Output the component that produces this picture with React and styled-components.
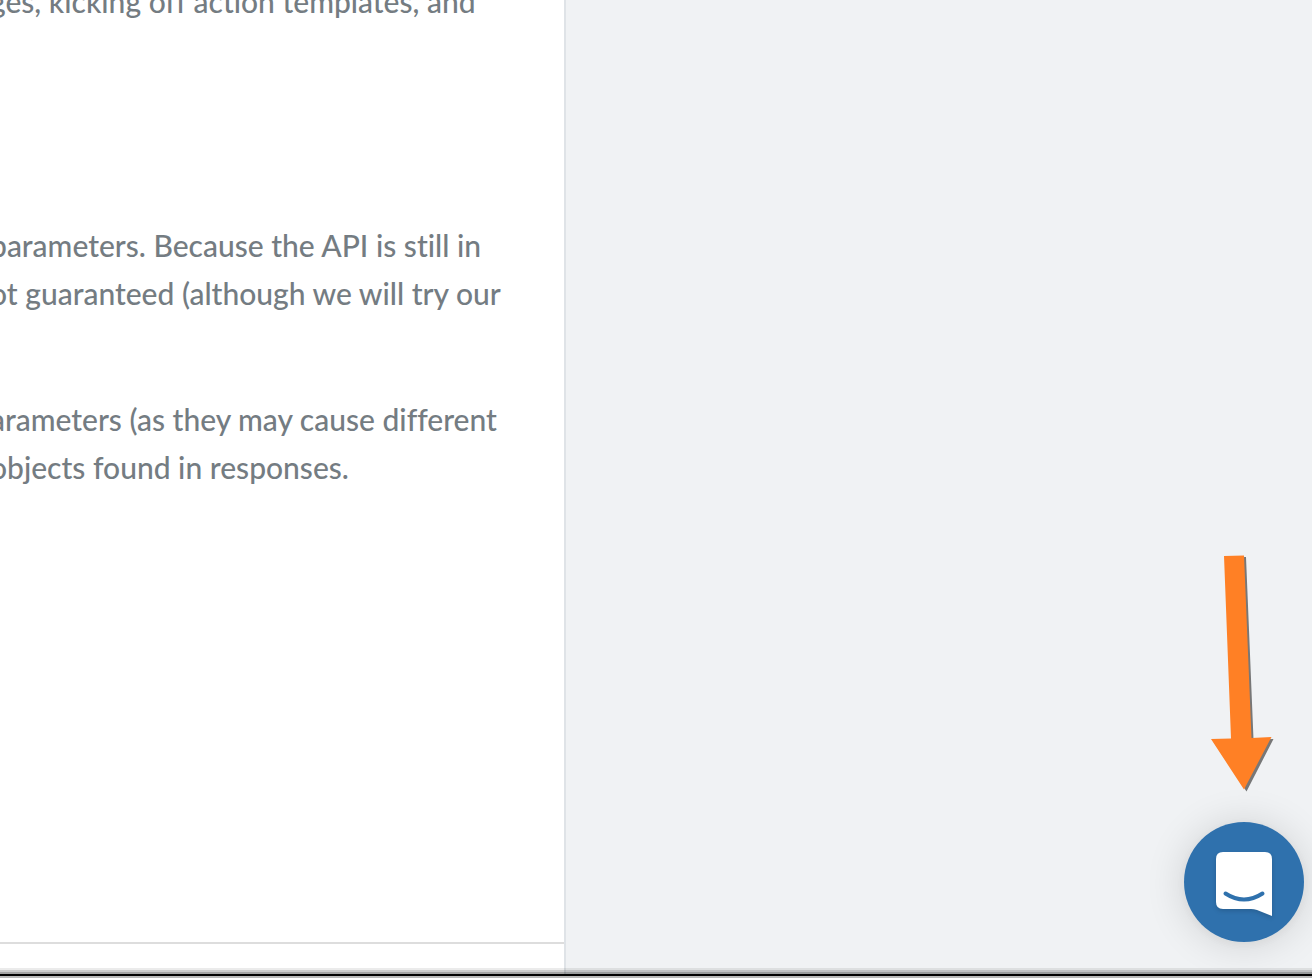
import React from 'react'
import styled, { createGlobalStyle } from 'styled-components'

const GlobalStyle = createGlobalStyle`
 * {
  box-sizing: border-box;
 }
 body {
  margin: 0;
  overflow: hidden;
  background-color: #f0f2f4;
  font-family: Lato, 'Open Sans', sans-serif;
 }
`

const Page = styled.div`
 display: flex;
 height: 100vh;
 overflow: hidden;
`

const DocsColumn = styled.main`
 display: flex;
 flex-direction: column;
 width: calc(43% + 2px);
 background-color: #ffffff;
 border-right: 2px solid #dfe3e7;
 overflow: hidden;
`

const Article = styled.article`
 flex: 1;
 margin-top: -23px;
 margin-left: -10px;
 border-bottom: 2px solid #dddddd;
`

const Paragraph = styled.p`
 margin: 0 0 ${(props) => (props.$last ? '196px' : '78px')};
 color: #747c82;
 font-size: 30px;
 font-weight: 500;
 font-variant-ligatures: none;
 line-height: 48px;
 white-space: nowrap;
`

const ColumnFooter = styled.footer`
 height: 34px;
`

const Examples = styled.aside`
 flex: 1;
 background-color: #f0f2f4;
`

const Messenger = styled.div`
 position: fixed;
 right: 8px;
 bottom: 36px;
 display: flex;
 flex-direction: column;
 align-items: center;
 gap: 30px;
`

const Launcher = styled.button`
 display: flex;
 align-items: center;
 justify-content: center;
 width: 120px;
 height: 120px;
 padding: 4px 0 0;
 border: none;
 border-radius: 50%;
 background-color: #2f71ad;
 box-shadow: 0 2px 40px rgba(0, 0, 0, 0.14), 0 2px 12px rgba(0, 0, 0, 0.05);
 cursor: pointer;

 svg {
  filter: drop-shadow(0 2px 2px rgba(0, 0, 0, 0.15));
 }
`

const WindowEdge = styled.div`
 position: fixed;
 left: 0;
 right: 0;
 bottom: 0;
 height: 10px;
 background: linear-gradient(
  rgba(0, 0, 0, 0.08) 2px,
  rgba(0, 0, 0, 0.2) 2px 4px,
  rgba(0, 0, 0, 0.36) 4px 6px,
  #000000 6px 8px,
  #b8b8b8 8px
 );
`

function Arrow() {
 return (
  <svg width="68" height="238" viewBox="0 0 68 238" aria-hidden="true">
   <path d="M16 3.5 L36 3 L43.5 185.5 L63.5 185 L36.5 237.5 L3 187 L23 186 Z" fill="#777777" />
   <path d="M14 2 L34 1.5 L41.5 184 L61.5 183 L34 235.5 L1 185 L21 184.5 Z" fill="#ff8025" />
  </svg>
 )
}

function ChatIcon() {
 return (
  <svg width="56" height="64" viewBox="0 0 56 64" aria-hidden="true">
   <path
    d="M7 0 H49 Q56 0 56 7 V64 L41 58 Q38 57 35 57 H7 Q0 57 0 50 V7 Q0 0 7 0 Z"
    fill="#ffffff"
   />
   <path
    d="M9.5 41.5 Q28 53.5 46.5 41.5"
    fill="none"
    stroke="#2f71ad"
    strokeWidth="4"
    strokeLinecap="round"
   />
  </svg>
 )
}

function App() {
 return (
  <>
   <GlobalStyle />
   <Page>
    <DocsColumn>
     <Article>
      <Paragraph $last>ges, kicking off action templates, and</Paragraph>
      <Paragraph>
       parameters. Because the API is still in
       <br />
       ot guaranteed (although we will try our
      </Paragraph>
      <Paragraph>
       arameters (as they may cause different
       <br />
       objects found in responses.
      </Paragraph>
     </Article>
     <ColumnFooter />
    </DocsColumn>
    <Examples />
   </Page>
   <Messenger>
    <Arrow />
    <Launcher type="button" aria-label="Open chat">
     <ChatIcon />
    </Launcher>
   </Messenger>
   <WindowEdge />
  </>
 )
}

export default App
